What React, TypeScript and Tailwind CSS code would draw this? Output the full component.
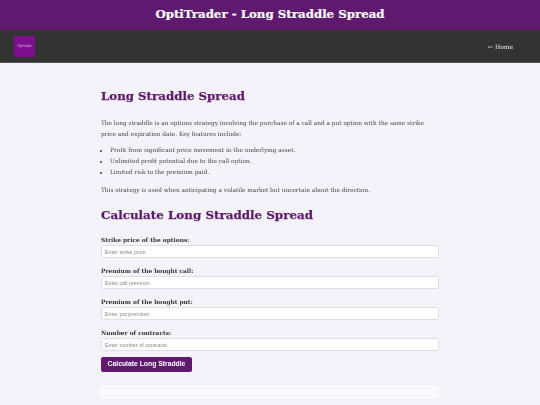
const fields = [
  { label: "Strike price of the options:", placeholder: "Enter strike price" },
  { label: "Premium of the bought call:", placeholder: "Enter call premium" },
  { label: "Premium of the bought put:", placeholder: "Enter put premium" },
  { label: "Number of contracts:", placeholder: "Enter number of contracts" },
];

export default function App() {
  return (
    <div className="h-[405px] overflow-hidden bg-[#f4f3f9] font-['DejaVu_Serif','Liberation_Serif',serif] text-[#444]">
      <header className="flex h-[30px] items-center justify-center bg-[#5f1a70] text-[11.8px] font-bold text-white [-webkit-text-stroke:0.2px_white]">
        OptiTrader - Long Straddle Spread
      </header>

      <nav className="flex h-[33px] items-center justify-between border-b border-[#555] bg-[#333] pl-[14px] pr-[27px]">
        <div className="flex h-[21px] w-[21px] items-center justify-center bg-[#800f8f] font-['Liberation_Sans',sans-serif] text-[3px] text-[#d9bfe0]">
          OptiTrader
        </div>
        <a className="text-[6px] text-[#eee] [will-change:transform]">← Home</a>
      </nav>

      <main className="mx-auto w-[338px] pt-[24px] [will-change:transform]">
        <h2 className="text-[11.8px] font-bold leading-[18px] text-[#5f1a70] [-webkit-text-stroke:0.25px_#5f1a70]">
          Long Straddle Spread
        </h2>
        <p className="mt-[13px] text-[5.8px] leading-[11px]">
          The long straddle is an options strategy involving the purchase of a call and a put option with the same
          strike price and expiration date. Key features include:
        </p>
        <ul className="mt-[5px] list-disc pl-[9px] text-[5.8px] leading-[11px]">
          <li>Profit from significant price movement in the underlying asset.</li>
          <li>Unlimited profit potential due to the call option.</li>
          <li>Limited risk to the premium paid.</li>
        </ul>
        <p className="mt-[7px] text-[5.8px] leading-[11px]">
          This strategy is used when anticipating a volatile market but uncertain about the direction.
        </p>
        <h2 className="mt-[10px] text-[11.9px] font-bold leading-[18px] text-[#5f1a70] [-webkit-text-stroke:0.25px_#5f1a70]">
          Calculate Long Straddle Spread
        </h2>

        <form className="mt-[12px] flex flex-col gap-[9px]">
          {fields.map((f) => (
            <div key={f.label}>
              <label className="block text-[5.85px] font-bold leading-[8px] text-[#333]">{f.label}</label>
              <input
                placeholder={f.placeholder}
                className="mt-[1px] block h-[13px] w-full rounded-[1.5px] border border-[#dddde4] bg-white px-[3px] font-['Liberation_Sans',sans-serif] text-[5.4px] placeholder:text-[#888]"
              />
            </div>
          ))}
        </form>
        <button className="mt-[6px] block h-[15px] w-[91px] rounded-[2px] bg-[#5f1a70] font-['Liberation_Sans',sans-serif] text-[6.8px] font-bold text-white">
          Calculate Long Straddle
        </button>
        <div className="mt-[13px] h-[14px] rounded-[2px] bg-[#f9f9fb]" />
      </main>
    </div>
  );
}
